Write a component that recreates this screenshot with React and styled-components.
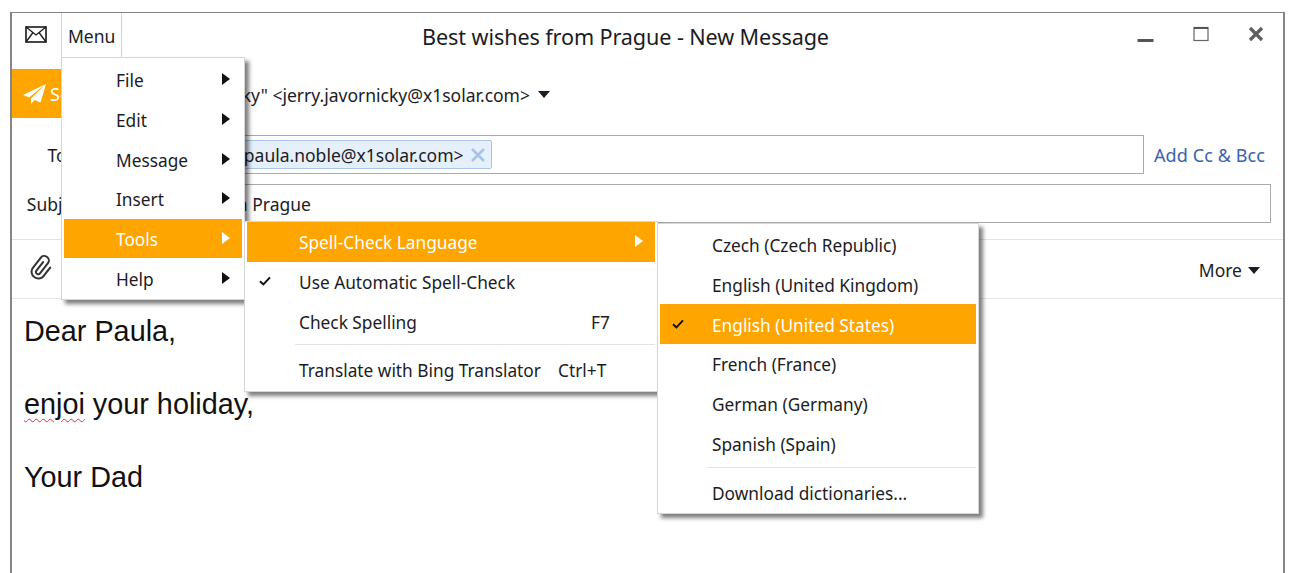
import React from "react";
import styled, { createGlobalStyle } from "styled-components";

const ORANGE = "#ffa500";

const Global = createGlobalStyle`
  html, body { margin: 0; padding: 0; background: #fff; height: 100%; overflow: hidden; }
  body { font-family: "Noto Sans", "Open Sans", sans-serif; color: #1c1c24; }
`;

const Window = styled.div`
  position: relative;
  margin: 12px 0 0 10px;
  width: 1275px;
  height: 561px;
  box-sizing: border-box;
  border: 2px solid #858585;
  border-top-width: 1px;
  border-bottom: none;
  background: #fff;
`;

const TitleBar = styled.div`
  display: flex;
  align-items: center;
  height: 56px;
`;

const AppIcon = styled.div`
  width: 49px;
  height: 46px;
  display: flex;
  align-items: center;
  justify-content: center;
  align-self: flex-start;
`;

const MenuTab = styled.div`
  align-self: flex-start;
  width: 61px;
  height: 44px;
  box-sizing: border-box;
  border: 1px solid #d2d2d2;
  border-top: none;
  border-bottom: none;
  font-size: 17.5px;
  padding: 11px 0 0 6px;
  background: #fff;
  position: relative;
  z-index: 4;
`;

const Title = styled.div`
  flex: 1;
  text-align: center;
  font-size: 21.6px;
  padding: 0 0 10px 11px;
  letter-spacing: -0.1px;
`;

const Controls = styled.div`
  display: flex;
  padding-bottom: 15px;
`;

const ControlButton = styled.div`
  width: 55px;
  height: 30px;
  display: flex;
  align-items: center;
  justify-content: center;
`;

const SendRow = styled.div`
  display: flex;
  align-items: center;
  height: 49px;
`;

const SendButton = styled.div`
  width: 110px;
  height: 100%;
  background: ${ORANGE};
  color: #fff;
  display: flex;
  align-items: center;
  gap: 4px;
  padding-left: 11px;
  box-sizing: border-box;
  font-size: 18px;
`;

const FromText = styled.div`
  width: 408px;
  white-space: nowrap;
  display: flex;
  justify-content: flex-end;
  font-size: 17.5px;
  padding-top: 2px;
`;

const Caret = styled.span`
  width: 0;
  height: 0;
  border-left: 6px solid transparent;
  border-right: 6px solid transparent;
  border-top: 7px solid #1c1c24;
  margin-left: ${(p) => p.$gap || 8}px;
  margin-top: 2px;
  display: inline-block;
`;

const Fields = styled.div`
  display: flex;
  flex-direction: column;
  gap: 10px;
  padding-top: 17px;
  padding-bottom: 16px;
  border-bottom: 1px solid #e4e4e4;
`;

const FieldRow = styled.div`
  display: flex;
  align-items: center;
  padding-right: 12px;
`;

const FieldLabel = styled.div`
  width: 90px;
  flex: none;
  text-align: center;
  font-size: 17.5px;
`;

const Input = styled.div`
  flex: 1;
  height: 39px;
  box-sizing: border-box;
  border: 1px solid #a9a9a9;
  display: flex;
  align-items: center;
  padding: ${(p) => p.$top || 0}px 0 0 ${(p) => p.$pad}px;
  font-size: 17.5px;
  white-space: nowrap;
`;

const Chip = styled.div`
  display: flex;
  align-items: center;
  height: 29px;
  box-sizing: border-box;
  background: #e6f0fb;
  border: 1px solid #a8c6ea;
  border-radius: 2px;
  padding: 0 5px 0 6px;
  gap: 6px;
`;

const AddLink = styled.div`
  color: #3a62ad;
  font-size: 18px;
  letter-spacing: 0.1px;
  width: 127px;
  flex: none;
  padding-left: 10px;
  box-sizing: border-box;
  white-space: nowrap;
`;

const Toolbar = styled.div`
  display: flex;
  align-items: center;
  justify-content: space-between;
  height: 58px;
  padding: 0 23px 0 15px;
  border-bottom: 1px solid #e4e4e4;
`;

const More = styled.div`
  display: flex;
  align-items: center;
  font-size: 17.5px;
  padding-top: 1px;
`;

const Body = styled.div`
  padding: 14px 0 0 12px;
  font-family: "Liberation Sans", Arial, sans-serif;
  font-size: 28.8px;
  line-height: 36.5px;
  color: #111;
`;

const Misspelt = styled.span`
  text-decoration: underline wavy #e0303a 1px;
  text-underline-offset: 4px;
`;

/* dropdowns lie over the form */
const Dropdown = styled.div`
  position: absolute;
  left: ${(p) => p.$left}px;
  top: ${(p) => p.$top}px;
  width: ${(p) => p.$width}px;
  box-sizing: border-box;
  background: #fff;
  border: 1px solid #d6d6d6;
  box-shadow: 4px 4px 4px rgba(0, 0, 0, 0.5);
  padding: ${(p) => p.$padTop}px 2px ${(p) => p.$padBottom || 0}px;
  z-index: ${(p) => p.$z};
`;

const Item = styled.div`
  display: flex;
  align-items: center;
  height: 39.7px;
  font-size: 17.3px;
  white-space: nowrap;
  padding-top: 2px;
  box-sizing: border-box;
  background: ${(p) => (p.$active ? ORANGE : "transparent")};
  color: ${(p) => (p.$active ? "#fff" : "inherit")};
`;

const CheckSlot = styled.span`
  width: ${(p) => p.$width}px;
  flex: none;
  padding: 0 0 3px 12px;
  box-sizing: border-box;
  display: flex;
  align-items: center;
`;

const Label = styled.span`
  flex: 1;
`;

const Shortcut = styled.span`
  width: ${(p) => p.$width || 97}px;
  flex: none;
`;

const Arrow = styled.span`
  width: 0;
  height: 0;
  border-top: 6px solid transparent;
  border-bottom: 6px solid transparent;
  border-left: 8px solid ${(p) => (p.$active ? "#fff" : "#111")};
  margin-right: ${(p) => p.$right}px;
  margin-bottom: 3px;
`;

const Separator = styled.div`
  height: 1px;
  background: #e2e2e2;
  margin: ${(p) => p.$above}px 0 ${(p) => p.$below}px ${(p) => p.$left}px;
`;

const Check = () => (
  <svg width="12" height="10" viewBox="0 0 12 10">
    <path d="M1 5.2 L4.4 8.4 L11 1.4" fill="none" stroke="#111" strokeWidth="2" />
  </svg>
);

const mainMenu = ["File", "Edit", "Message", "Insert", "Tools", "Help"];
const languages = [
  "Czech (Czech Republic)",
  "English (United Kingdom)",
  "English (United States)",
  "French (France)",
  "German (Germany)",
  "Spanish (Spain)",
];

export default function App() {
  return (
    <>
      <Global />
      <Window>
        <TitleBar>
          <AppIcon>
            <svg width="22" height="17" viewBox="0 0 22 17" style={{ marginBottom: 4, marginRight: 2 }}>
              <rect x="1" y="1" width="20" height="15" fill="none" stroke="#1a1a1a" strokeWidth="1.6" />
              <path d="M1 1 L11 9 L21 1 M1 16 L8 6.5 M21 16 L14 6.5" fill="none" stroke="#1a1a1a" strokeWidth="1.3" />
            </svg>
          </AppIcon>
          <MenuTab>Menu</MenuTab>
          <Title>Best wishes from Prague - New Message</Title>
          <Controls>
            <ControlButton>
              <svg width="17" height="20" viewBox="0 0 17 20">
                <rect x="0.5" y="15" width="16" height="3" fill="#555" />
              </svg>
            </ControlButton>
            <ControlButton>
              <svg width="16" height="16" viewBox="0 0 16 16">
                <rect x="1" y="1.5" width="14" height="13" fill="none" stroke="#666" strokeWidth="1.2" />
                <rect x="1" y="1" width="14" height="2" fill="#555" />
              </svg>
            </ControlButton>
            <ControlButton>
              <svg width="16" height="16" viewBox="0 0 16 16">
                <path d="M2 2 L14 14 M14 2 L2 14" stroke="#5e5e5e" strokeWidth="3.2" />
              </svg>
            </ControlButton>
          </Controls>
        </TitleBar>

        <SendRow>
          <SendButton>
            <svg width="23" height="20" viewBox="0 0 23 20">
              <path d="M23 0 L0 11 L6 13.5 Z M23 0 L8 14.5 L8 20 L11.5 16 L17.5 18.5 Z" fill="#fff" />
            </svg>
            Send
          </SendButton>
          <FromText>"Jerry Javornicky" &lt;jerry.javornicky@x1solar.com&gt;</FromText>
          <Caret />
        </SendRow>

        <Fields>
          <FieldRow>
            <FieldLabel>To</FieldLabel>
            <Input $pad={6}>
              <Chip>
                "Paula Noble" &lt;paula.noble@x1solar.com&gt;
                <svg width="16" height="16" viewBox="0 0 16 16">
                  <path d="M2 2 L14 14 M14 2 L2 14" stroke="#a9c3e6" strokeWidth="2.6" />
                </svg>
              </Chip>
            </Input>
            <AddLink>Add Cc &amp; Bcc</AddLink>
          </FieldRow>
          <FieldRow>
            <FieldLabel>Subject</FieldLabel>
            <Input $pad={4} $top={1}>Best wishes from Prague</Input>
          </FieldRow>
        </Fields>

        <Toolbar>
          <svg width="27" height="28" viewBox="0 0 24 24">
            <g transform="rotate(38 12 12)">
              <path
                d="M10 7 V17 a2 2 0 0 0 4 0 V5 a4 4 0 0 0 -8 0 V17 a6 6 0 0 0 12 0 V7"
                fill="none"
                stroke="#333"
                strokeWidth="1.8"
                strokeLinecap="round"
                transform="translate(0 -1) scale(1 0.96)"
              />
            </g>
          </svg>
          <More>
            More
            <Caret $gap={6} />
          </More>
        </Toolbar>

        <Body>
          <div>Dear Paula,</div>
          <div>&nbsp;</div>
          <div>
            <Misspelt>enjoi</Misspelt> your holiday,
          </div>
          <div>&nbsp;</div>
          <div>Your Dad</div>
        </Body>

        <Dropdown $left={49} $top={44} $width={184} $padTop={2} $padBottom={1} $z={3}>
          {mainMenu.map((name) => (
            <Item key={name} $active={name === "Tools"}>
              <CheckSlot $width={52} />
              <Label>{name}</Label>
              <Arrow $active={name === "Tools"} $right={12} />
            </Item>
          ))}
        </Dropdown>

        <Dropdown $left={232} $top={208} $width={414} $padTop={0} $padBottom={1} $z={5}>
          <Item $active>
            <CheckSlot $width={52} />
            <Label>Spell-Check Language</Label>
            <Arrow $active $right={12} />
          </Item>
          <Item>
            <CheckSlot $width={52}>
              <Check />
            </CheckSlot>
            <Label>Use Automatic Spell-Check</Label>
          </Item>
          <Item>
            <CheckSlot $width={52} />
            <Label>Check Spelling</Label>
            <Shortcut $width={64}>F7</Shortcut>
          </Item>
          <Separator $above={3} $below={5} $left={48} />
          <Item>
            <CheckSlot $width={52} />
            <Label>Translate with Bing Translator</Label>
            <Shortcut $width={97}>Ctrl+T</Shortcut>
          </Item>
        </Dropdown>

        <Dropdown $left={645} $top={210} $width={322} $padTop={1} $z={6}>
          {languages.map((lang) => (
            <Item key={lang} $active={lang === "English (United States)"}>
              <CheckSlot $width={52}>{lang === "English (United States)" && <Check />}</CheckSlot>
              <Label>{lang}</Label>
            </Item>
          ))}
          <Separator $above={4} $below={5} $left={47} />
          <Item>
            <CheckSlot $width={52} />
            <Label>Download dictionaries...</Label>
          </Item>
        </Dropdown>
      </Window>
    </>
  );
}
